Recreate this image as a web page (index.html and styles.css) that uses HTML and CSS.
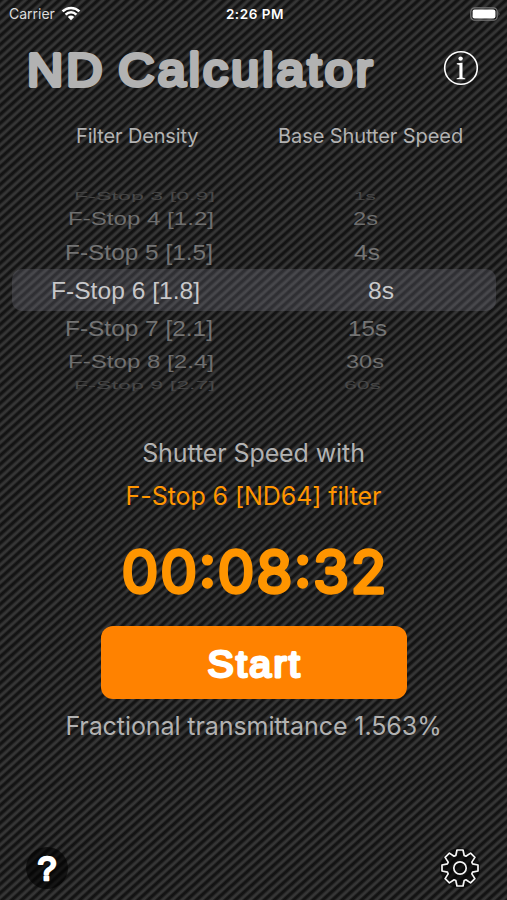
FILE: index.html
```html
<!DOCTYPE html>
<html lang="en">
<head>
<meta charset="utf-8">
<title>ND Calculator</title>
<link rel="stylesheet" href="styles.css">
</head>
<body>
<div class="screen">
  <header class="status">
    <div class="carrier"><span>Carrier</span>
      <svg width="20" height="15" viewBox="0 0 20 15" fill="none" stroke="#fff" stroke-width="2.5"><path d="M1.6 5.4a12 12 0 0 1 16.8 0M4.6 8.6a7.6 7.6 0 0 1 10.8 0"/><path d="M6.8 10.9a4.6 4.6 0 0 1 6.4 0L10 14.2z" fill="#fff" stroke="none"/></svg>
    </div>
    <div class="clock">2:26 PM</div>
    <svg class="battery" width="31" height="14" viewBox="0 0 31 14"><rect x=".8" y=".8" width="26.4" height="12.4" rx="3.8" fill="none" stroke="#777" stroke-width="1.2"/><rect x="2.6" y="2.6" width="22.8" height="8.8" rx="2" fill="#fff"/><path d="M28.6 4.8q1.8 2.2 0 4.4z" fill="#777"/></svg>
  </header>

  <div class="heading">
    <svg class="title" width="380" height="60" viewBox="0 0 380 60"><text transform="translate(2 40.5) scale(1.1 1)" textLength="314" lengthAdjust="spacing">ND Calculator</text></svg>
    <svg class="info" width="36" height="36" viewBox="0 0 36 36"><circle cx="18" cy="18" r="16.3" fill="none" stroke="#fff" stroke-width="1.6"/><circle cx="17.6" cy="8.6" r="2.2" fill="#fff"/><path d="M13.8 13.3L19.5 12.8V27.5L22.3 28.5V29.3H13.6V28.5L16.4 27.5V15.1L13.8 14.2Z" fill="#fff"/></svg>
  </div>

  <div class="labels">
    <span class="label-density">Filter Density</span>
    <span class="label-base">Base Shutter Speed</span>
  </div>

  <div class="picker">
    <svg class="wheel" width="507" height="220" viewBox="0 0 507 220">
      <g class="far">
        <text transform="translate(74 24) scale(1 .46)" textLength="141" lengthAdjust="spacingAndGlyphs">F-Stop 3 [0.9]</text>
        <text transform="translate(354 24) scale(1 .46)" textLength="22" lengthAdjust="spacingAndGlyphs">1s</text>
        <text transform="translate(74 212.5) scale(1 .46)" textLength="141" lengthAdjust="spacingAndGlyphs">F-Stop 9 [2.7]</text>
        <text transform="translate(344 212.5) scale(1 .46)" textLength="37" lengthAdjust="spacingAndGlyphs">60s</text>
      </g>
      <g class="mid">
        <text transform="translate(68 49) scale(1 .74)" textLength="146" lengthAdjust="spacingAndGlyphs">F-Stop 4 [1.2]</text>
        <text transform="translate(353 49) scale(1 .74)" textLength="25" lengthAdjust="spacingAndGlyphs">2s</text>
        <text transform="translate(68 192) scale(1 .74)" textLength="146" lengthAdjust="spacingAndGlyphs">F-Stop 8 [2.4]</text>
        <text transform="translate(346 192) scale(1 .74)" textLength="38" lengthAdjust="spacingAndGlyphs">30s</text>
      </g>
      <g class="near">
        <text transform="translate(65 83.5) scale(1 .92)" textLength="148" lengthAdjust="spacingAndGlyphs">F-Stop 5 [1.5]</text>
        <text transform="translate(354 83.5) scale(1 .92)" textLength="26" lengthAdjust="spacingAndGlyphs">4s</text>
        <text transform="translate(65 160) scale(1 .92)" textLength="148" lengthAdjust="spacingAndGlyphs">F-Stop 7 [2.1]</text>
        <text transform="translate(348 160) scale(1 .92)" textLength="39" lengthAdjust="spacingAndGlyphs">15s</text>
      </g>
      <g class="selected">
        <text x="51" y="122.6" textLength="149" lengthAdjust="spacingAndGlyphs">F-Stop 6 [1.8]</text>
        <text x="368" y="122.6" textLength="26" lengthAdjust="spacingAndGlyphs">8s</text>
      </g>
    </svg>
  </div>

  <main class="result">
    <div class="with">Shutter Speed with</div>
    <div class="filter">F-Stop 6 [ND64] filter</div>
    <svg class="timer" width="300" height="80" viewBox="0 0 300 80"><text x="17.5" y="61.5" textLength="265" lengthAdjust="spacing">00:08:32</text></svg>
    <button class="start"><svg width="110" height="50" viewBox="0 0 110 50"><text transform="translate(8.5 38.5) scale(1.06 1)" textLength="87" lengthAdjust="spacing">Start</text></svg></button>
    <div class="fraction">Fractional transmittance 1.563%</div>
  </main>

  <footer class="toolbar">
    <svg class="help" width="44" height="44" viewBox="0 0 44 44"><circle cx="22" cy="22" r="21" fill="#000" opacity=".6"/><text x="22" y="34" text-anchor="middle">?</text></svg>
    <svg width="44" height="44" viewBox="-22 -22 44 44" fill="none" stroke="#f4f4f4" stroke-width="1.7" stroke-linejoin="round"><circle r="20" fill="#000" stroke="none" opacity=".6"/><circle r="6.2"/><path d="M-4.2-12.5L-3-18H3L4.2-12.5 5.9-11.8 10.6-14.9 14.9-10.6 11.8-5.9 12.5-4.2 18-3 18 3 12.5 4.2 11.8 5.9 14.9 10.6 10.6 14.9 5.9 11.8 4.2 12.5 3 18-3 18-4.2 12.5-5.9 11.8-10.6 14.9-14.9 10.6-11.8 5.9-12.5 4.2-18 3-18-3-12.5-4.2-11.8-5.9-14.9-10.6-10.6-14.9-5.9-11.8Z"/></svg>
  </footer>
</div>
</body>
</html>
```
FILE: styles.css
```css
* { box-sizing: border-box; }
body { margin: 0; }
svg { display: block; flex: none; }
.screen {
  width: 507px;
  height: 900px;
  overflow: hidden;
  display: flex;
  flex-direction: column;
  color: #b2b2b2;
  font-family: Inter, "Liberation Sans", sans-serif;
  white-space: nowrap;
  background: repeating-linear-gradient(138deg, #121212 0, #141414 1.5px, #343434 3.4px, #373737 4.6px, #121212 6.5px);
}
.status {
  height: 28px;
  display: grid;
  grid-template-columns: 1fr auto 1fr;
  align-items: center;
  padding: 0 6px 1px 9px;
  color: #fff;
  font-size: 14px;
}
.carrier { display: flex; align-items: center; gap: 6px; color: #ddd; }
.clock { font-size: 13.5px; font-weight: 600; letter-spacing: .55px; }
.battery { justify-self: end; }
.heading {
  height: 80px;
  display: flex;
  justify-content: space-between;
  padding: 22px 28px 0 25px;
}
.title { margin-top: -5px; }
.title text {
  font: 45.5px "Liberation Sans", sans-serif;
  word-spacing: -4px;
  fill: #b2b2b2;
  stroke: #b2b2b2;
  stroke-width: 3.8px;
  stroke-linejoin: round;
}
.labels { height: 70px; display: flex; padding: 16px 0 0 76px; font-size: 20px; line-height: 24px; }
.label-density { width: 202px; letter-spacing: -.15px; }
.label-base { letter-spacing: -.08px; }
.picker { height: 220px; display: grid; }
.picker::before {
  content: "";
  grid-area: 1 / 1;
  height: 42px;
  margin: 91px 11px 0 12px;
  border-radius: 10px;
  background: rgba(118, 118, 130, .29);
}
.wheel { grid-area: 1 / 1; margin-top: -2px; font: 24px "Liberation Sans", sans-serif; }
.far { fill: #484848; }
.mid { fill: #6f6f6f; }
.near { fill: #747474; }
.selected { fill: #c8c8ca; }
.result { height: 422px; display: flex; flex-direction: column; align-items: center; padding-top: 40px; }
.with { font-size: 25px; line-height: 30px; letter-spacing: -.1px; }
.filter { margin-top: 13px; font-size: 25px; line-height: 30px; color: #ff9500; letter-spacing: -.08px; }
.timer { margin: 20px 0 15px; }
.timer text {
  font: 400 58.5px Inter, sans-serif;
  fill: #ff9500;
  stroke: #ff9500;
  stroke-width: 3.4px;
  stroke-linejoin: round;
}
.start {
  width: 306px;
  height: 73px;
  padding: 0;
  border: 0;
  border-radius: 12px;
  display: flex;
  align-items: center;
  justify-content: center;
  background: #ff8200;
}
.start text { font: 37px "Liberation Sans", sans-serif; fill: #fff; stroke: #fff; stroke-width: 2.8px; stroke-linejoin: round; }
.fraction { margin-top: 12px; font-size: 25px; line-height: 30px; letter-spacing: -.08px; }
.toolbar { display: flex; justify-content: space-between; padding: 26px 25px 0 25px; }
.help text { font: 400 33px "Liberation Sans", sans-serif; fill: #fff; stroke: #fff; stroke-width: 2.6px; stroke-linejoin: round; }
```
